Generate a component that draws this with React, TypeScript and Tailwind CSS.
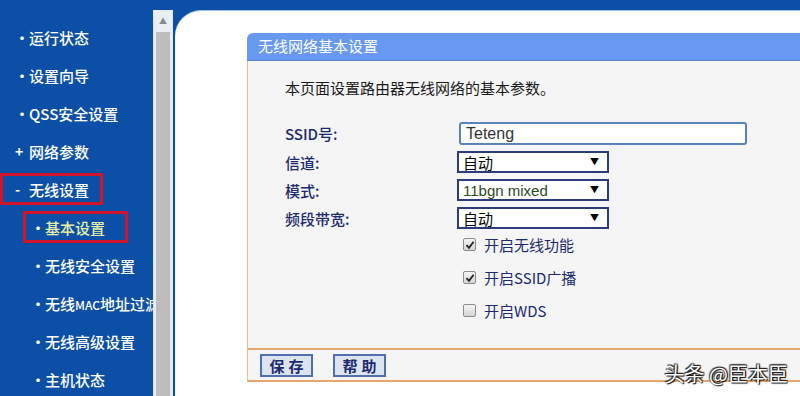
import React from 'react';

const cjk = "font-['Noto_Sans_CJK_SC',sans-serif]";

interface MenuItem {
  label: React.ReactNode;
  key: string;
  mark: string;
  level: number;
  boxed?: boolean;
  active?: boolean;
}

const menu: MenuItem[] = [
  { key: 'run', label: '运行状态', mark: '•', level: 0 },
  { key: 'wizard', label: '设置向导', mark: '•', level: 0 },
  { key: 'qss', label: 'QSS安全设置', mark: '•', level: 0 },
  { key: 'net', label: '网络参数', mark: '+', level: 0 },
  { key: 'wl', label: '无线设置', mark: '-', level: 0, boxed: true },
  { key: 'basic', label: '基本设置', mark: '•', level: 1, boxed: true, active: true },
  { key: 'sec', label: '无线安全设置', mark: '•', level: 1 },
  {
    key: 'mac',
    label: (
      <>
        无线<span className="text-[12px]">MAC</span>地址过滤
      </>
    ),
    mark: '•',
    level: 1,
  },
  { key: 'adv', label: '无线高级设置', mark: '•', level: 1 },
  { key: 'host', label: '主机状态', mark: '•', level: 1 },
];

function Sidebar() {
  return (
    <div className="w-[153px] shrink-0 bg-[#0b4fa6] pt-[18px] overflow-hidden">
      {menu.map((item) => (
        <div key={item.key} className={`h-[38px] flex items-center whitespace-nowrap ${item.level ? 'pl-[23px]' : 'pl-0'}`}>
          <div
            className={`h-[32px] flex items-center border-[3px] ${
              item.boxed ? 'border-[#d0152a]' : 'border-transparent'
            } ${item.level ? 'pl-[3px] pr-[20px]' : 'pl-[10px] pr-[11px]'}`}
          >
            <span className="w-[16px] pl-[2px] text-white text-[14px] font-bold leading-none">{item.mark}</span>
            <span className={`text-[15px] font-medium leading-none ${item.active ? 'text-[#e6f0a8]' : 'text-white'}`}>
              {item.label}
            </span>
          </div>
        </div>
      ))}
    </div>
  );
}

function Scrollbar() {
  return (
    <div className="w-[20px] shrink-0 bg-[#0b4fa6] pt-[10px] flex flex-col">
      <div className="flex-1 flex flex-col bg-[#e9eef5] border-x border-[#dfe6ef]">
        <div className="h-[22px] flex items-center justify-center text-[8px] text-[#8a8a8a]">▲</div>
        <div className="flex-1 bg-[#bdbdbd] mx-[2px]" />
      </div>
    </div>
  );
}

function SelectBox({ value, latin }: { value: string; latin?: boolean }) {
  return (
    <div className="w-[152px] h-[22px] border-2 border-[#2e3c7c] bg-white flex items-center justify-between pl-[4px] pr-[8px]">
      <span
        className={`text-[15px] leading-none ${
          latin ? "text-[#2f4a25] font-['Liberation_Sans',sans-serif]" : 'text-black'
        }`}
      >
        {value}
      </span>
      <span className="text-[9px] text-black">▼</span>
    </div>
  );
}

function Check({ checked, label }: { checked: boolean; label: string }) {
  return (
    <div className="h-[33px] flex items-center gap-[8px]">
      <div className="w-[13px] h-[13px] rounded-[2px] border border-[#8c8c8c] bg-gradient-to-b from-[#f4f4f4] to-[#d6d6d6] flex items-center justify-center">
        {checked && (
          <svg width="10" height="10" viewBox="0 0 10 10">
            <path d="M1.5 5.2 L4 7.8 L8.6 1.8" stroke="#222" strokeWidth="1.8" fill="none" />
          </svg>
        )}
      </div>
      <span className="text-[15px] text-[#1c2a70] leading-none">{label}</span>
    </div>
  );
}

function FormRow({ label, children }: { label: string; children: React.ReactNode }) {
  return (
    <div className="flex items-center">
      <div className="w-[172px] text-[15px] text-[#1c2a70] font-medium leading-none">{label}</div>
      {children}
    </div>
  );
}

export default function App() {
  return (
    <div className={`w-[800px] h-[396px] flex overflow-hidden relative ${cjk}`}>
      <Sidebar />
      <Scrollbar />
      <div className="flex-1 bg-[#0b4fa6] pt-[10px] pl-[2px] flex flex-col">
        <div className="flex-1 bg-white rounded-tl-[26px] border-t border-[#9fc0ec] pt-[22px] pl-[72px] overflow-hidden">
          <div className="w-[640px] flex flex-col">
            <div className="h-[28px] bg-[#6699ef] rounded-tl-[6px] border-b border-[#5b82c8] flex items-center pl-[11px] text-white text-[15px]">
              无线网络基本设置
            </div>
            <div className="h-[287px] bg-[#f5f5f5] border-l border-[#f0bd8a] pl-[37px] pt-[17px]">
              <div className="text-[15px] text-[#1a1a1a] leading-[20px]">本页面设置路由器无线网络的基本参数。</div>
              <div className="mt-[24px] flex flex-col gap-[6px]">
                <FormRow label="SSID号:">
                  <div className="ml-[2px] w-[288px] h-[23px] rounded-[3px] border-2 border-[#5a82bd] bg-white flex items-center pl-[5px] text-[16px] text-[#333] leading-none font-['Liberation_Sans',sans-serif]">
                    Teteng
                  </div>
                </FormRow>
                <FormRow label="信道:">
                  <SelectBox value="自动" />
                </FormRow>
                <FormRow label="模式:">
                  <SelectBox value="11bgn mixed" latin />
                </FormRow>
                <FormRow label="频段带宽:">
                  <SelectBox value="自动" />
                </FormRow>
              </div>
              <div className="pl-[178px] mt-[-1px] flex flex-col">
                <Check checked label="开启无线功能" />
                <Check checked label="开启SSID广播" />
                <Check checked={false} label="开启WDS" />
              </div>
            </div>
            <div className="h-[34px] bg-[#f5f5f5] border-y-2 border-[#e6a66c] border-l border-l-[#f0bd8a] flex items-center gap-[20px] pl-[12px]">
              <button className="w-[53px] h-[23px] border-2 border-[#4f6fae] bg-[#dde4f0] text-[15px] text-[#1c2a70] font-bold tracking-[4px] pl-[4px] leading-none">
                保存
              </button>
              <button className="w-[53px] h-[23px] border-2 border-[#4f6fae] bg-[#dde4f0] text-[15px] text-[#1c2a70] font-bold tracking-[4px] pl-[4px] leading-none">
                帮助
              </button>
            </div>
          </div>
        </div>
      </div>
      <div className="absolute right-[12px] bottom-[12px] text-[20px] text-white leading-none [text-shadow:1px_1px_1px_#000,-1px_-1px_1px_#222,1px_-1px_1px_#222]">
        头条 @臣本臣
      </div>
    </div>
  );
}
